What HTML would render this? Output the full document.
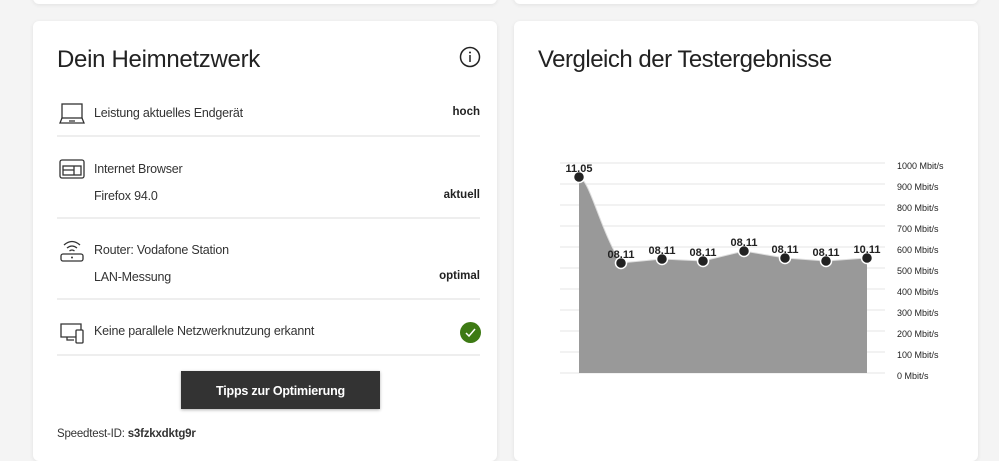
<!DOCTYPE html>
<html><head><meta charset="utf-8"><style>
body{margin:0;width:999px;height:439px;overflow:hidden;background:#f4f4f4;font-family:"Liberation Sans",sans-serif;color:#333;position:relative}
.card{position:absolute;background:#fff;border-radius:6px;box-shadow:0 1px 4px rgba(0,0,0,.08)}
.t{position:absolute;font-size:12.5px;white-space:nowrap;letter-spacing:-0.2px}
.b{position:absolute;font-size:11.5px;font-weight:bold;right:17px;color:#222}
.sep{position:absolute;left:24px;right:17px;height:2px;background:#eee}
.ic{position:absolute;left:26px}
</style></head><body>
<div class="card" style="left:33px;top:-10px;width:464px;height:14px"></div>
<div class="card" style="left:514px;top:-10px;width:464px;height:14px"></div>
<div class="card" style="left:33px;top:21px;width:464px;height:440px">
 <div class="t" style="left:24px;top:25px;font-size:24px;color:#222;letter-spacing:-0.3px">Dein Heimnetzwerk</div>
 <svg style="position:absolute;left:426px;top:25px" width="22" height="22" viewBox="0 0 22 22"><circle cx="11" cy="11" r="9.5" fill="none" stroke="#222" stroke-width="1.5"/><circle cx="11" cy="6.5" r="1" fill="#222"/><path d="M11 9v7" stroke="#222" stroke-width="1.5"/></svg>
 <svg class="ic" style="top:82px" width="26" height="22" viewBox="0 0 26 22"><rect x="3" y="1" width="20" height="14" fill="none" stroke="#333" stroke-width="1.3"/><path d="M3 15L1 20H25L23 15M10 18h6" fill="none" stroke="#333" stroke-width="1.3"/></svg>
 <div class="t" style="left:61px;top:85px">Leistung aktuelles Endgerät</div>
 <div class="b" style="top:85px">hoch</div>
 <div class="sep" style="top:114px"></div>
 <svg class="ic" style="top:138px" width="26" height="22" viewBox="0 0 26 22"><rect x="1" y="1" width="24" height="18" rx="2" fill="none" stroke="#333" stroke-width="1.3"/><rect x="4" y="7" width="18" height="9" fill="none" stroke="#333" stroke-width="1.3"/><path d="M15 7v9M4 11h11" stroke="#333" stroke-width="1.3"/></svg>
 <div class="t" style="left:61px;top:141px">Internet Browser</div>
 <div class="t" style="left:61px;top:168px">Firefox 94.0</div>
 <div class="b" style="top:168px">aktuell</div>
 <div class="sep" style="top:196px"></div>
 <svg class="ic" style="top:218px" width="26" height="24" viewBox="0 0 26 24"><path d="M5 6Q13 -1 21 6M8 9Q13 5 18 9M10.5 12Q13 10 15.5 12" fill="none" stroke="#333" stroke-width="1.3"/><rect x="2" y="15" width="22" height="7" rx="2" fill="none" stroke="#333" stroke-width="1.3"/><circle cx="13" cy="18.5" r="1" fill="#333"/></svg>
 <div class="t" style="left:61px;top:222px">Router: Vodafone Station</div>
 <div class="t" style="left:61px;top:249px">LAN-Messung</div>
 <div class="b" style="top:249px">optimal</div>
 <div class="sep" style="top:277px"></div>
 <svg class="ic" style="top:300px" width="26" height="24" viewBox="0 0 26 24"><path d="M17 16H2V3H22V9M8 16v3h7" fill="none" stroke="#333" stroke-width="1.3"/><rect x="17" y="9" width="7" height="13" rx="1" fill="#fff" stroke="#333" stroke-width="1.3"/></svg>
 <div class="t" style="left:61px;top:303px">Keine parallele Netzwerknutzung erkannt</div>
 <svg style="position:absolute;left:427px;top:301px" width="21" height="21" viewBox="0 0 21 21"><circle cx="10.5" cy="10.5" r="10.5" fill="#3d7a14"/><path d="M6 11l3 3 6-7" fill="none" stroke="#fff" stroke-width="1.5"/></svg>
 <div class="sep" style="top:333px"></div>
 <div style="position:absolute;left:148px;top:350px;width:199px;height:38px;background:#333;color:#fff;font-weight:bold;font-size:12.5px;letter-spacing:-0.2px;text-align:center;line-height:40px;box-shadow:0 1px 3px rgba(0,0,0,.3)">Tipps zur Optimierung</div>
 <div class="t" style="left:24px;top:407px;font-size:11.5px">Speedtest-ID: <b>s3fzkxdktg9r</b></div>
</div>
<div class="card" style="left:514px;top:21px;width:464px;height:440px">
 <div class="t" style="left:24px;top:25px;font-size:24px;color:#222;letter-spacing:-0.5px">Vergleich der Testergebnisse</div>
</div>
<svg style="position:absolute;left:0;top:0" width="999" height="439">
 <g stroke="#eee" stroke-width="1.5">
  <path d="M560 163H885M560 184H885M560 205H885M560 226H885M560 247H885M560 268H885M560 289H885M560 310H885M560 331H885M560 352H885M560 373H885"/>
 </g>
 <path d="M579 177C590 180 600 230 621 263L662 259L703 261L744 251L785 258L826 261L867 258V373H579Z" fill="#999"/>
 <path d="M579 177C590 180 600 230 621 263L662 259L703 261L744 251L785 258L826 261L867 258" fill="none" stroke="#ddd" stroke-width="1"/>
 <g fill="#222" stroke="#fff" stroke-width="1.5">
  <circle cx="579" cy="177" r="5.5"/><circle cx="621" cy="263" r="5.5"/><circle cx="662" cy="259" r="5.5"/><circle cx="703" cy="261" r="5.5"/><circle cx="744" cy="251" r="5.5"/><circle cx="785" cy="258" r="5.5"/><circle cx="826" cy="261" r="5.5"/><circle cx="867" cy="258" r="5.5"/>
 </g>
 <g font-family="Liberation Sans" font-size="11" font-weight="bold" fill="#222" text-anchor="middle">
  <text x="579" y="172">11.05</text><text x="621" y="258">08.11</text><text x="662" y="254">08.11</text><text x="703" y="256">08.11</text><text x="744" y="246">08.11</text><text x="785" y="253">08.11</text><text x="826" y="256">08.11</text><text x="867" y="253">10.11</text>
 </g>
 <g font-family="Liberation Sans" font-size="9" fill="#222">
  <text x="897" y="169">1000 Mbit/s</text><text x="897" y="190">900 Mbit/s</text><text x="897" y="211">800 Mbit/s</text><text x="897" y="232">700 Mbit/s</text><text x="897" y="253">600 Mbit/s</text><text x="897" y="274">500 Mbit/s</text><text x="897" y="295">400 Mbit/s</text><text x="897" y="316">300 Mbit/s</text><text x="897" y="337">200 Mbit/s</text><text x="897" y="358">100 Mbit/s</text><text x="897" y="379">0 Mbit/s</text>
 </g>
</svg>
</body></html>
